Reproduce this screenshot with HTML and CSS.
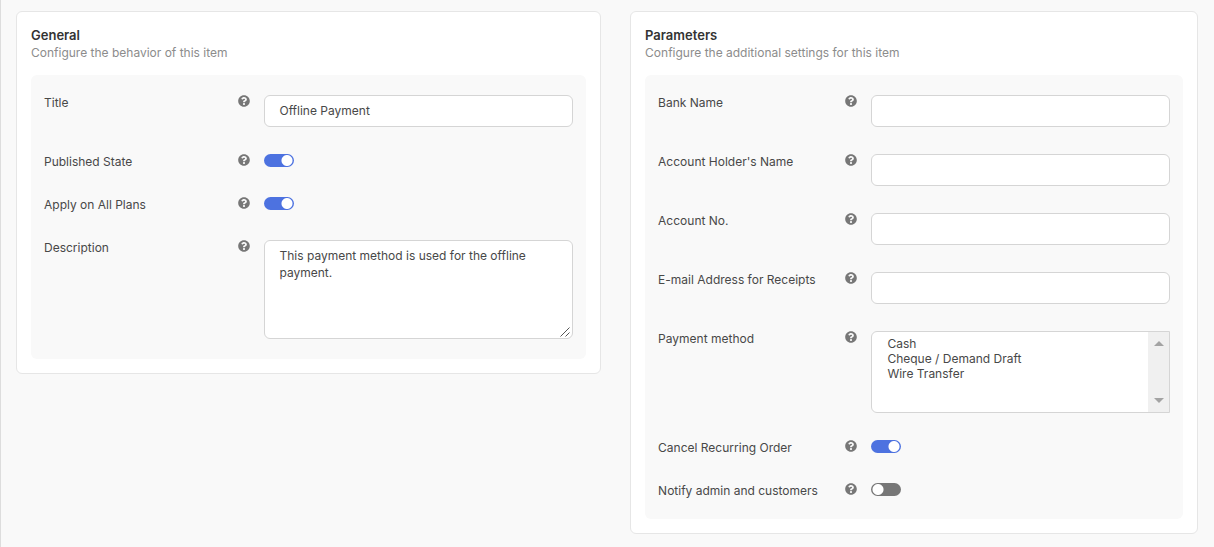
FILE: index.html
```html
<!DOCTYPE html>
<html lang="en">
<head>
  <meta charset="UTF-8" />
  <meta name="viewport" content="width=device-width, initial-scale=1" />
  <title>Offline Payment</title>
  <link rel="stylesheet" href="styles.css">
</head>
<body>
  <svg width="0" height="0" class="sprite" aria-hidden="true">
    <symbol id="help" viewBox="0 0 512 512">
      <path d="M504 256c0 137-111 248-248 248S8 393 8 256 119 8 256 8s248 111 248 248zM262.700 90c-54.500 0-89.300 23-116.500 63.800-3.500 5.300-2.400 12.400 2.700 16.300l34.700 26.300c5.200 3.900 12.600 3 16.700-2.100 17.900-22.700 30.100-35.800 57.300-35.800 20.400 0 45.700 13.100 45.700 33 0 15-12.400 22.700-32.500 34C247.100 238.500 216 254.900 216 296v4c0 6.600 5.400 12 12 12h56c6.600 0 12-5.400 12-12v-1.300c0-28.500 83.200-29.600 83.200-106.700 0-58-60.200-102-116.500-102zM256 338c-25.400 0-46 20.600-46 46s20.600 46 46 46 46-20.600 46-46-20.600-46-46-46z"/>
    </symbol>
  </svg>

  <form class="layout">
    <section class="card">
      <h2>General</h2>
      <p class="subtitle">Configure the behavior of this item</p>
      <div class="panel">
        <div class="row">
          <div class="label"><label for="title">Title</label><svg class="help"><use href="#help"/></svg></div>
          <input class="field" type="text" id="title" value="Offline Payment">
        </div>
        <div class="row">
          <div class="label"><label for="published">Published State</label><svg class="help"><use href="#help"/></svg></div>
          <input class="switch" type="checkbox" id="published" checked>
        </div>
        <div class="row">
          <div class="label"><label for="allPlans">Apply on All Plans</label><svg class="help"><use href="#help"/></svg></div>
          <input class="switch" type="checkbox" id="allPlans" checked>
        </div>
        <div class="row">
          <div class="label"><label for="description">Description</label><svg class="help"><use href="#help"/></svg></div>
          <div class="control">
            <textarea class="field" id="description">This payment method is used for the offline payment.</textarea>
            <svg class="grip" viewBox="0 0 12 12"><path d="M1.500 10.500L10.500 1.500M6.500 10.500L10.500 6.500"/></svg>
          </div>
        </div>
      </div>
    </section>

    <section class="card">
      <h2>Parameters</h2>
      <p class="subtitle">Configure the additional settings for this item</p>
      <div class="panel">
        <div class="row">
          <div class="label"><label for="bank">Bank Name</label><svg class="help"><use href="#help"/></svg></div>
          <input class="field" type="text" id="bank">
        </div>
        <div class="row">
          <div class="label"><label for="holder">Account Holder's Name</label><svg class="help"><use href="#help"/></svg></div>
          <input class="field" type="text" id="holder">
        </div>
        <div class="row">
          <div class="label"><label for="account">Account No.</label><svg class="help"><use href="#help"/></svg></div>
          <input class="field" type="text" id="account">
        </div>
        <div class="row">
          <div class="label"><label for="email">E-mail Address for Receipts</label><svg class="help"><use href="#help"/></svg></div>
          <input class="field" type="email" id="email">
        </div>
        <div class="row">
          <div class="label"><label for="method">Payment method</label><svg class="help"><use href="#help"/></svg></div>
          <div class="control">
            <select class="field" id="method" multiple>
              <option>Cash</option>
              <option>Cheque / Demand Draft</option>
              <option>Wire Transfer</option>
            </select>
            <div class="scrollbar">
              <svg width="10" height="5" viewBox="0 0 10 5"><path d="M0 5L5 0l5 5z"/></svg>
              <svg width="10" height="5" viewBox="0 0 10 5"><path d="M0 0l5 5 5-5z"/></svg>
            </div>
          </div>
        </div>
        <div class="row">
          <div class="label"><label for="cancel">Cancel Recurring Order</label><svg class="help"><use href="#help"/></svg></div>
          <input class="switch" type="checkbox" id="cancel" checked>
        </div>
        <div class="row">
          <div class="label"><label for="notify">Notify admin and customers</label><svg class="help"><use href="#help"/></svg></div>
          <input class="switch" type="checkbox" id="notify">
        </div>
      </div>
    </section>
  </form>
</body>
</html>
```
FILE: styles.css
```css
* {
  box-sizing: border-box;
}

body {
  font-family: Inter, sans-serif;
  font-size: 12px;
  line-height: 16px;
  margin: 0;
  min-height: 100vh;
  padding: 11px 16px 13px 15px;
  color: #484848;
  background: #f9f9f9;
  border-left: 1px solid #ddd;
}

.sprite {
  position: absolute;
}

.layout {
  display: grid;
  grid-template-columns: 34fr 33fr;
  align-items: start;
  gap: 29px;
}

.card {
  padding: 14px;
  background: #fff;
  border: 1px solid #e6e6e6;
  border-radius: 6px;
}

h2 {
  margin: 0;
  font-size: 13px;
  font-weight: 600;
  line-height: 18px;
  color: #333;
}

.subtitle {
  margin: 0 0 14px;
  line-height: 17px;
  color: #8c8c8c;
}

.panel {
  display: grid;
  gap: 27px;
  padding: 20px 13px;
  background: #f9f9f9;
  border-radius: 6px;
}

.row {
  display: grid;
  grid-template-columns: 5fr 7fr;
  align-items: start;
}

.label {
  display: flex;
  justify-content: space-between;
  padding-right: 14px;
}

.help {
  width: 12px;
  height: 12px;
  fill: #777;
}

.control {
  position: relative;
}

.field {
  display: block;
  width: 100%;
  height: 32px;
  margin: 0;
  padding: 6px 14px 8px;
  font: inherit;
  line-height: 17px;
  color: #484848;
  background: #fff;
  border: 1px solid #d5d5d5;
  border-radius: 6px;
}

textarea.field {
  height: 99px;
  resize: none;
}

.grip {
  position: absolute;
  right: 2px;
  bottom: 1px;
  width: 12px;
  height: 12px;
  fill: none;
  stroke: #555;
  pointer-events: none;
}

select.field {
  height: 82px;
  padding: 4px 22px 5px 13px;
  border-radius: 6px 0 0 6px;
}

.field option {
  min-height: 15px;
  padding: 0 2px;
  line-height: 15px;
}

.scrollbar {
  position: absolute;
  top: 1px;
  right: 1px;
  bottom: 1px;
  width: 21px;
  display: flex;
  flex-direction: column;
  justify-content: space-between;
  align-items: center;
  padding: 9px 0;
  background: #f0f0f0;
  fill: #a3a3a3;
  pointer-events: none;
}

.switch {
  appearance: none;
  width: 30px;
  height: 13px;
  margin: 0;
  background: radial-gradient(circle at 7px 50%, #fff 5px, #777 6px);
  border-radius: 7px;
}

.switch:checked {
  background: radial-gradient(circle at 23px 50%, #fff 5px, #4d72e0 6px);
}

.row:has(.switch) {
  min-height: 16px;
}
```
